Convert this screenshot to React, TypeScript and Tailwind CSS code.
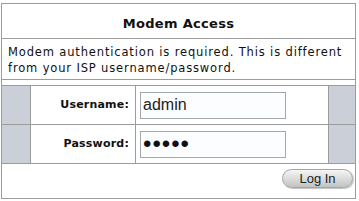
import { useState } from "react";

const Gray = () => <div className="bg-[#cbd0d8]" />;

const App = () => {
  const [username, setUsername] = useState("admin");
  const [password, setPassword] = useState("admin");

  return (
    <div className="w-[359px] h-[201px] bg-white pt-[3px] pl-[1px] font-['DejaVu_Sans',sans-serif] text-[#111]">
      <div className="w-[355px] h-[196px] border border-[#9c9c9c] flex flex-col">
        {/* header */}
        <div className="h-[35px] border-b border-[#9c9c9c] flex items-center justify-center">
          <h1 className="text-[13px] font-bold tracking-[0.3px] pt-[5px]">Modem Access</h1>
        </div>

        {/* description */}
        <div className="h-[41px] border-b border-[#9c9c9c] px-[6px] pt-[5px] text-[11.5px] tracking-[0.85px] leading-[16px]">
          Modem authentication is required. This is different from your ISP
          username/password.
        </div>

        {/* form */}
        <div className="mt-[5px] border-t border-b border-[#9c9c9c] grid grid-cols-[28px_104px_192px_26px] grid-rows-[38px_38px] gap-px bg-[#9c9c9c]">
          <Gray />
          <div className="bg-white flex items-center justify-end pr-[6px] text-[11px] font-bold tracking-[0.2px]">
            Username:
          </div>
          <div className="bg-white flex items-center pl-[4px]">
            <input
              type="text"
              value={username}
              onChange={(e) => setUsername(e.target.value)}
              className="w-[146px] h-[27px] border border-[#a3a8ad] bg-[#fbfdfe] px-[2px] text-[16px] font-['Liberation_Sans',sans-serif] text-[#222] outline-none"
            />
          </div>
          <Gray />

          <Gray />
          <div className="bg-white flex items-center justify-end pr-[6px] text-[11px] font-bold tracking-[0.2px]">
            Password:
          </div>
          <div className="bg-white flex items-center pl-[4px]">
            <input
              type="password"
              value={password}
              onChange={(e) => setPassword(e.target.value)}
              className="w-[146px] h-[27px] border border-[#a3a8ad] bg-[#fbfdfe] px-[2px] text-[24px] leading-none tracking-[1px] font-['Liberation_Sans',sans-serif] text-[#111] outline-none"
            />
          </div>
          <Gray />
        </div>

        {/* footer */}
        <div className="flex-1 flex justify-end items-start pt-[5px] pr-[2px]">
          <button className="w-[71px] h-[19px] rounded-full border border-[#a5a5a5] bg-gradient-to-b from-[#f6f6f6] via-[#dcdcdc] to-[#c0c3c6] text-[13px] leading-none font-['Liberation_Sans',sans-serif] text-[#222] shadow-[1px_1px_1px_rgba(0,0,0,0.25)]">
            Log In
          </button>
        </div>
      </div>
    </div>
  );
};

export default App;
